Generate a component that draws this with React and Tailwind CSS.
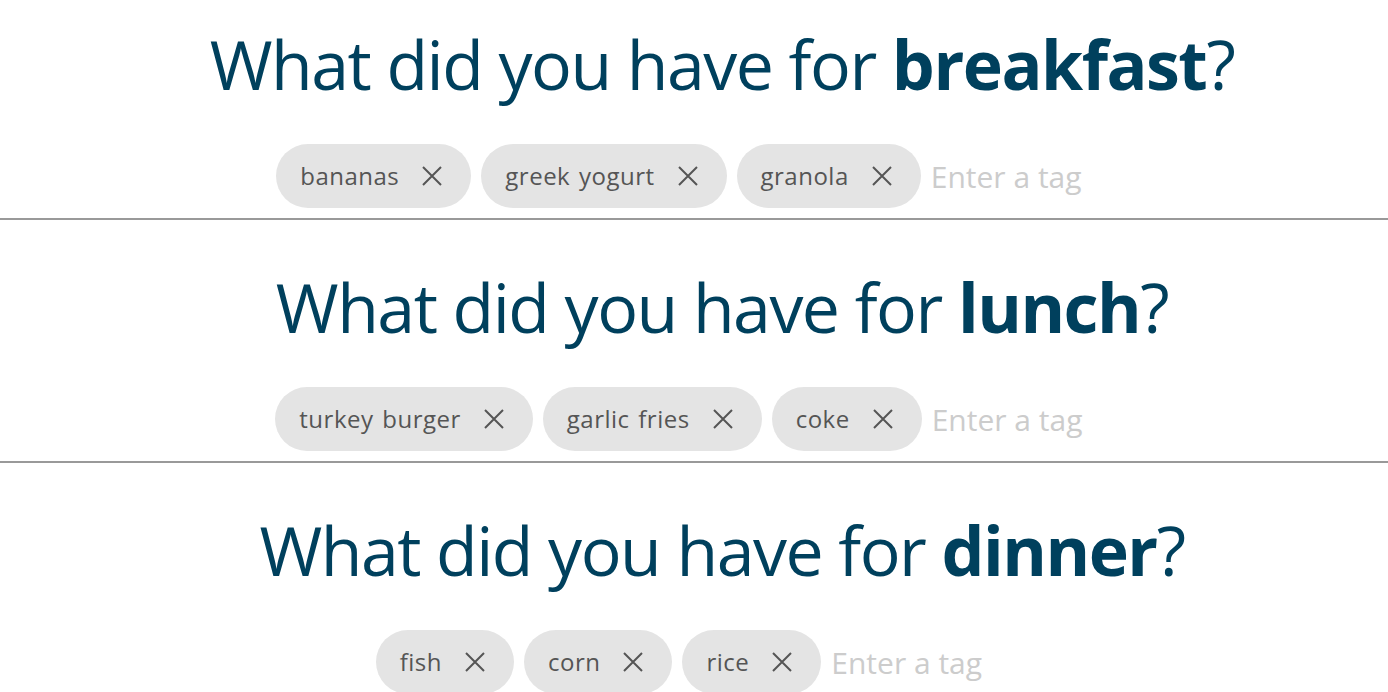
import { useState } from "react";

const meals = [
    { name: "breakfast", tags: ["bananas", "greek yogurt", "granola"] },
    { name: "lunch", tags: ["turkey burger", "garlic fries", "coke"] },
    { name: "dinner", tags: ["fish", "corn", "rice"] },
];

const CloseIcon = () => (
    <svg width="20" height="20" viewBox="0 0 20 20" className="shrink-0">
        <path d="M1 1 L19 19 M19 1 L1 19" stroke="#555555" strokeWidth="2" fill="none" />
    </svg>
);

const TagInput = ({ initial }) => {
    const [tags, setTags] = useState(initial);
    const [value, setValue] = useState("");

    const handleKey = (e) => {
        if (e.key === "Enter" && value.trim()) {
            setTags([...tags, value.trim()]);
            setValue("");
        }
    };

    return (
        <div className="flex items-center justify-center gap-[10px]">
            {tags.map((tag, i) => (
                <div
                    key={tag + i}
                    className="flex items-center h-[64px] pl-[24px] pr-[29px] rounded-full bg-[#e4e4e4] text-[#555555] text-[24px] tracking-[0.5px] [word-spacing:2px]"
                >
                    <span>{tag}</span>
                    <button
                        type="button"
                        onClick={() => setTags(tags.filter((_, j) => j !== i))}
                        className="ml-[23px] flex items-center"
                    >
                        <CloseIcon />
                    </button>
                </div>
            ))}
            <input
                type="text"
                value={value}
                onChange={(e) => setValue(e.target.value)}
                onKeyDown={handleKey}
                placeholder="Enter a tag"
                className="w-[181px] text-[30px] text-[#555555] placeholder:text-[#cccccc] bg-transparent focus:outline-none"
            />
        </div>
    );
};

export default function App() {
    return (
        <div className="bg-white overflow-hidden h-[692px] font-['Segoe_UI','Open_Sans',sans-serif]">
            <div className="-mt-[23px]">
                {meals.map((meal) => (
                    <section key={meal.name} className="pt-[44px] pb-[10px] border-b-2 border-[#999999]">
                        <h1 className="text-center text-[68px] leading-[86px] tracking-[-1.5px] text-[#00405d] pl-[56px] font-normal">
                            What did you have for <span className="font-bold">{meal.name}</span>?
                        </h1>
                        <div className="mt-[37px]">
                            <TagInput initial={meal.tags} />
                        </div>
                    </section>
                ))}
            </div>
        </div>
    );
}
